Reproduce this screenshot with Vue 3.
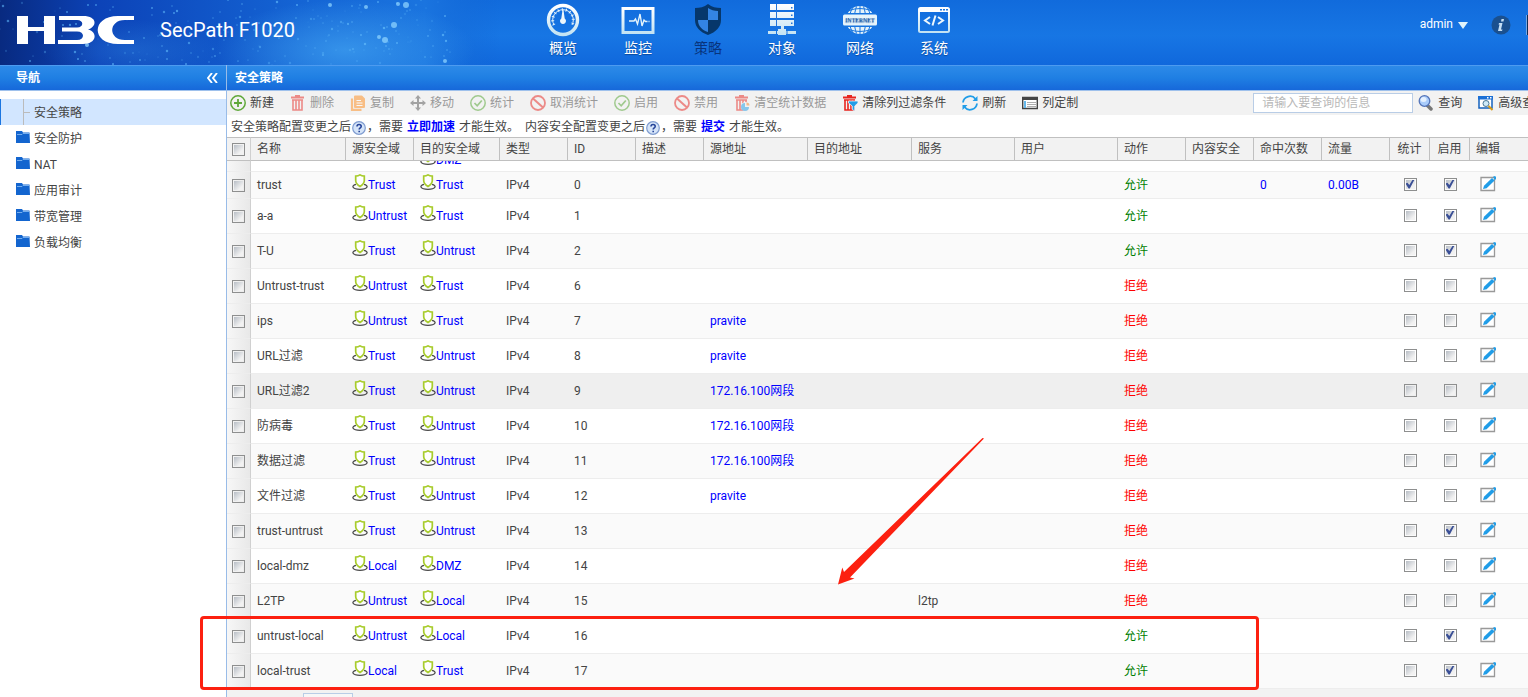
<script setup>
const nav = [
  { label: '概览', icon: 'gauge' },
  { label: '监控', icon: 'monitor' },
  { label: '策略', icon: 'policy', active: true },
  { label: '对象', icon: 'objects' },
  { label: '网络', icon: 'net' },
  { label: '系统', icon: 'system' },
]
const folders = ['安全防护', 'NAT', '应用审计', '带宽管理', '负载均衡']
const tools = [
  { label: '新建', icon: 'add', on: true },
  { label: '删除', icon: 'trash' },
  { label: '复制', icon: 'copy' },
  { label: '移动', icon: 'move' },
  { label: '统计', icon: 'okay' },
  { label: '取消统计', icon: 'ban' },
  { label: '启用', icon: 'okay' },
  { label: '禁用', icon: 'ban' },
  { label: '清空统计数据', icon: 'trashstat' },
  { label: '清除列过滤条件', icon: 'trashfilter', on: true },
  { label: '刷新', icon: 'refresh', on: true },
  { label: '列定制', icon: 'columns', on: true },
]
const columns = [
  ['名称', 'w95'], ['源安全域', 'w68'], ['目的安全域', 'w86'], ['类型', 'w68'], ['ID', 'w68'],
  ['描述', 'w68'], ['源地址', 'w104'], ['目的地址', 'w104'], ['服务', 'w103'], ['用户', 'w103'],
  ['动作', 'w68'], ['内容安全', 'w68'], ['命中次数', 'w68'], ['流量', 'w68'],
  ['统计', 'w40'], ['启用', 'w40'], ['编辑', 'wrest'],
]
const row = (id, name, src, dst, allow, enabled, extra = {}) => ({ id, name, src, dst, allow, enabled, ...extra })
const rows = [
  row(0, 'trust', 'Trust', 'Trust', true, true, { stat: true, hits: '0', flow: '0.00B', short: true }),
  row(1, 'a-a', 'Untrust', 'Trust', true, true),
  row(2, 'T-U', 'Trust', 'Untrust', true, true),
  row(6, 'Untrust-trust', 'Untrust', 'Trust', false, false),
  row(7, 'ips', 'Untrust', 'Trust', false, false, { addr: 'pravite' }),
  row(8, 'URL过滤', 'Trust', 'Untrust', false, false, { addr: 'pravite' }),
  row(9, 'URL过滤2', 'Trust', 'Untrust', false, false, { addr: '172.16.100网段', hover: true }),
  row(10, '防病毒', 'Trust', 'Untrust', false, false, { addr: '172.16.100网段' }),
  row(11, '数据过滤', 'Trust', 'Untrust', false, false, { addr: '172.16.100网段' }),
  row(12, '文件过滤', 'Trust', 'Untrust', false, false, { addr: 'pravite' }),
  row(13, 'trust-untrust', 'Trust', 'Untrust', false, true),
  row(14, 'local-dmz', 'Local', 'DMZ', false, false),
  row(15, 'L2TP', 'Untrust', 'Local', false, false, { service: 'l2tp' }),
  row(16, 'untrust-local', 'Untrust', 'Local', true, true),
  row(17, 'local-trust', 'Local', 'Trust', true, true),
]
let seed = 11
const rand = () => (seed = (seed * 16807) % 2147483647) / 2147483647
const stars = Array.from({ length: 210 }, () => ({
  x: Math.round(rand() * 450),
  y: Math.round(rand() * 65),
  r: 0.5 + rand() * 0.8,
  o: 0.2 + rand() * 0.55,
}))
</script>

<template>
  <div class="page">
    <svg class="defs" aria-hidden="true">
      <defs>
        <linearGradient id="ice" x1="0" y1="0" x2="0" y2="1">
          <stop offset="0" stop-color="#fff" /><stop offset="1" stop-color="#c3e3f3" />
        </linearGradient>
        <symbol id="gauge" viewBox="0 0 34 34">
          <circle cx="17" cy="17" r="14.5" fill="none" stroke="url(#ice)" stroke-width="3.4" />
          <path d="M8 22a10.300 10.300 0 1 1 18 0" fill="none" stroke="#e4f3fb" stroke-width="1" />
          <path d="M8 22a10.300 10.300 0 1 1 18 0" fill="none" stroke="#e4f3fb" stroke-width="3" stroke-dasharray="1 3" />
          <path d="M16.500 7h1l1.200 8.500a3 3 0 1 1-3.400 0z" fill="#edf7fc" />
        </symbol>
        <symbol id="monitor" viewBox="0 0 34 34">
          <path d="M2 5.500h30v24H2z" fill="none" stroke="url(#ice)" stroke-width="3" />
          <path d="M8 18h5l1.500-2 2 5 2.500-10 2 12 2-6 1.500 1.500h2M27.500 18.500h1" fill="none" stroke="#e4f3fb" stroke-width="1.400" />
        </symbol>
        <symbol id="policy" viewBox="0 0 34 34">
          <path d="M17 1c4 3 8 4 13 4v12c0 7-5 12-13 15C9 29 4 24 4 17V5c5 0 9-1 13-4z" fill="#06376b" />
          <path d="M17 5c3 2 6 3 10 3v9H17zM7 17h10v12C11 27 7 23 7 17z" fill="#3384e4" />
        </symbol>
        <symbol id="objects" viewBox="0 0 34 34">
          <path d="M5 1h24v6H5zM5 9h24v6H5zM5 17h24v6H5zM16 23h3v4h-3zM3 28h28v3H3zM13 26h8v6h-8z" fill="url(#ice)" />
          <path d="M11 1h1v22h-1zM26 4h1.500v1.500H26zM26 11.500h1.500V13H26zM26 19.500h1.500V21H26z" fill="#2475d8" />
          <path d="M11.500 27v5M22 27v5" stroke="#1775e0" />
        </symbol>
        <symbol id="net" viewBox="0 0 34 34">
          <circle cx="17" cy="17" r="14" fill="#e3f2fa" />
          <path d="M17 3v28M13.500 3.500c-3 8-3 19 0 27M20.500 3.500c3 8 3 19 0 27M10 4c-5 8-5 18 0 26M24 4c5 8 5 18 0 26M5 8q12-5 24 0M5 26q12 5 24 0" fill="none" stroke="#1775e0" stroke-width="1" />
          <rect x="-1" y="10" width="36" height="14" fill="#1775e0" /><rect x="0" y="11.500" width="34" height="11" rx="1.500" fill="#e6f4fb" />
          <text x="17" y="19.200" text-anchor="middle" font-family="Liberation Serif" font-size="6" fill="#0d4f9e">INTERNET</text>
        </symbol>
        <symbol id="system" viewBox="0 0 34 34">
          <rect x="2" y="5" width="30" height="24" rx="1.500" fill="none" stroke="url(#ice)" stroke-width="2" />
          <path d="M2 6h30v3H2z" fill="#fff" /><path d="M23 6h2v1.500h-2zM26 6h2v1.500h-2zM29 6h2v1.500h-2z" fill="#1775e0" />
          <path d="M13 14l-5 3.500 5 3.500M21 14l5 3.500-5 3.500M18.500 12.500l-3 10" fill="none" stroke="#edf7fc" stroke-width="2" />
        </symbol>
        <symbol id="add" viewBox="0 0 16 16"><circle cx="8" cy="8" r="7.200" fill="none" stroke="#5fa83a" stroke-width="1.500" /><path d="M8 4v8M4 8h8" stroke="#5fa83a" stroke-width="1.800" /></symbol>
        <symbol id="trash" viewBox="0 0 16 16"><path d="M5 1h5M1 2.500h13" stroke="#e8251f" stroke-width="1.800" /><path d="M3 5.500v9.500h9V5.500M6 5v10M9 5v10M2 5h11" fill="none" stroke="#e8251f" stroke-width="1.600" /></symbol>
        <symbol id="trashstat" viewBox="0 0 16 16"><use href="#trash" /><circle cx="11.500" cy="11.500" r="4.500" fill="#f2f2f2" /><path d="M11 8v4h4a4 4 0 1 1-4-4z" fill="#209de8" /><path d="M12.500 7.500a3 3 0 0 1 3 3h-3z" fill="#f58220" /></symbol>
        <symbol id="trashfilter" viewBox="0 0 16 16"><use href="#trash" /><path d="M6.500 6h9.500v2l-3.300 3V16l-2.500-1.500V11L6.500 8z" fill="#209de8" stroke="#f2f2f2" stroke-width=".8" /></symbol>
        <symbol id="copy" viewBox="0 0 16 16"><path d="M5 1.500h6.500L14 4v8H5z" fill="#ff8c1a" stroke="#ff8c1a" stroke-width="2" stroke-linejoin="round" /><path d="M2 3.500v11.300h9.500" fill="none" stroke="#ff8c1a" stroke-width="2.200" /><path d="M6.500 5.500H11M6.500 8h6M6.500 10.500h6" stroke="#fff" stroke-width="1.200" /></symbol>
        <symbol id="move" viewBox="0 0 16 16"><path d="M8 2v12M2 8h12" stroke="#555" stroke-width="2" /><path d="M8 0l3 3.500H5zM8 16l3-3.500H5zM0 8l3.500-3v6zM16 8l-3.500-3v6z" fill="#555" /></symbol>
        <symbol id="okay" viewBox="0 0 16 16"><circle cx="8" cy="8" r="7.200" fill="none" stroke="#4fa32c" stroke-width="1.500" /><path d="M4.500 8l2.700 2.800L11.800 5.500" fill="none" stroke="#4fa32c" stroke-width="1.700" /></symbol>
        <symbol id="ban" viewBox="0 0 16 16"><circle cx="8" cy="8" r="7" fill="none" stroke="#e8251f" stroke-width="1.800" /><path d="M3 3.500l10 9" stroke="#e8251f" stroke-width="2" /></symbol>
        <symbol id="refresh" viewBox="0 0 16 16"><path d="M1 7.500A7 7 0 0 1 13.500 4M15 8.500A7 7 0 0 1 2.500 12" fill="none" stroke="#209de8" stroke-width="1.800" /><path d="M15.500 1v5h-5zM.5 15v-5h5z" fill="#209de8" /></symbol>
        <symbol id="columns" viewBox="0 0 16 16"><path d="M.7 2.500h14.600v11H.7z" fill="#fff" stroke="#444" stroke-width="1.400" /><path d="M0 2h16v3H0z" fill="#444" /><path d="M5 7.500h9M5 9.500h9M5 11.500h9" stroke="#999" stroke-width=".8" /><path d="M2 6h2v7H2z" fill="#65b9ec" /></symbol>
        <symbol id="search" viewBox="0 0 16 16"><path d="M9 10l4 4" stroke="#777" stroke-width="3.500" stroke-linecap="round" /><circle cx="6.500" cy="6" r="5.300" fill="#a9ccfb" stroke="#5474b8" stroke-width="1.300" /><ellipse cx="5.500" cy="4.500" rx="3" ry="2.500" fill="#e4f0ff" /></symbol>
        <symbol id="adv" viewBox="0 0 16 16"><path d="M1 2h13v11H1z" fill="#fff" stroke="#1461bd" stroke-width="1.500" /><path d="M0 1h15v3.500H0z" fill="#1a6fd6" /><path d="M9 2h1.500v1.500H9zM12 2h1.500v1.500H12z" fill="#fff" /><circle cx="8" cy="8.500" r="3" fill="#cfeaf8" stroke="#4a7896" /><path d="M10.500 11l4 4" stroke="#d79a17" stroke-width="2" /></symbol>
        <symbol id="help" viewBox="0 0 14 14"><circle cx="7" cy="7" r="6.300" fill="#d5e4f8" stroke="#7f9cd0" stroke-width="1.200" /><path d="M5 5.600c0-3 4.200-2.500 4.200-.2C9.200 7 7.200 6.800 7.200 8.600M7.200 9.700v1.500" fill="none" stroke="#26449a" stroke-width="1.600" /></symbol>
        <symbol id="zone" viewBox="0 0 16 16"><path d="M4 10.300C-1 11.500 0 15.300 8 15.300s9-3.800 4-5" fill="none" stroke="#4a4a4a" stroke-width="1.300" /><path d="M8 .8c1.300 1 2.600 1.300 4.300 1.300v4.400c0 2.600-1.600 4.300-4.300 6-2.700-1.700-4.300-3.400-4.300-6V2.100C5.400 2.100 6.700 1.800 8 .8z" fill="#fff" stroke="#a8cc2c" stroke-width="1.700" /></symbol>
        <symbol id="edit" viewBox="0 0 16 16"><path d="M1 1.500h13.500v13H1z" fill="#fff" stroke="#999" stroke-width="1.300" /><path d="M3 13l1-3.300L12 2l2.600 2.500-8 7.700z" fill="#209de8" /><path d="M13 .8l2-.8 1 1v2l-1 1z" fill="#209de8" /></symbol>
        <symbol id="folder" viewBox="0 0 14 12"><path d="M0 0h6l1 1.500h6.500L14 12H0z" fill="#1365cf" /><path d="M1 3.500l5 0 1-1h6" fill="none" stroke="#7fb5f0" stroke-width=".9" /></symbol>
      </defs>
    </svg>

    <header class="banner">
      <svg class="sky" viewBox="0 0 500 65" preserveAspectRatio="none" aria-hidden="true">
        <defs>
          <linearGradient id="skyfill"><stop offset="0" stop-color="#082a80" /><stop offset=".2" stop-color="#0c43b8" /><stop offset=".6" stop-color="#1464d4" /><stop offset=".85" stop-color="#1a74df" /><stop offset="1" stop-color="#1264d3" stop-opacity="0" /></linearGradient>
          <radialGradient id="glow"><stop offset="0" stop-color="#3fa0f0" stop-opacity=".75" /><stop offset="1" stop-color="#3fa0f0" stop-opacity="0" /></radialGradient>
        </defs>
        <rect width="500" height="65" fill="url(#skyfill)" />
        <ellipse cx="345" cy="50" rx="130" ry="50" fill="url(#glow)" />
        <ellipse cx="130" cy="50" rx="90" ry="30" fill="url(#glow)" opacity=".35" />
        <circle v-for="(s, i) in stars" :key="i" :cx="s.x" :cy="s.y" :r="s.r" fill="#5fb8fa" :opacity="s.o" />
        <g fill="#8cd2ff" opacity=".75"><circle cx="394" cy="25" r="3" /><circle cx="385" cy="40" r="3" /><circle cx="379" cy="37" r="2" /><circle cx="406" cy="5" r="3" /><circle cx="398" cy="4" r="2" /><circle cx="330" cy="5" r="2" /><circle cx="366" cy="7" r="2" /><circle cx="445" cy="61" r="2" /><circle cx="87" cy="45" r="2" /></g>
      </svg>
      <svg class="logo" viewBox="0 0 118 28" role="img" aria-label="H3C">
        <g fill="#fff"><path d="M0 0h11v11h16V0h11v28H27V15H11v13H0z" /><path d="M42 0h24c15 0 14 11 5 13.500C81 16 80 28 66 28H41v-4h19c8 0 8-8.500 0-8.500H45v-4h15c7 0 7-7.500 0-7.500H42z" /><path d="M117 0v4h-9c-17 0-17 20 0 20h9v4h-16C74 28 74 0 101 0z" /></g>
      </svg>
      <h1>SecPath F1020</h1>
      <nav class="mainnav">
        <a v-for="n in nav" :key="n.label" href="#" :class="{ active: n.active }">
          <svg><use :href="'#' + n.icon" /></svg><span>{{ n.label }}</span>
        </a>
      </nav>
      <div class="account">
        <button class="user">admin<svg viewBox="0 0 10 7"><path d="M0 0h10L5 7z" fill="#e0f3fb" /></svg></button>
        <button class="info" aria-label="Info"><svg viewBox="0 0 20 20"><circle cx="10" cy="10" r="9.500" fill="#1a508f" /><path d="M10.500 4h2.500l-.5 2.500H10zM8 8h3.500l-1.500 6.500h1.500l-.5 1.500H7l1.500-6.500H7.500z" fill="#c4def4" /></svg></button>
        <span class="edge"></span>
      </div>
    </header>

    <div class="body">
      <aside class="side">
        <div class="bar"><h2>导航</h2><button class="fold" aria-label="收起"><svg viewBox="0 0 11 10"><path d="M5 0L1 5l4 5M10 0L6 5l4 5" fill="none" stroke="#fff" stroke-width="1.900" /></svg></button></div>
        <ul class="tree">
          <li class="current"><a href="#">安全策略</a></li>
          <li v-for="f in folders" :key="f"><a href="#"><svg><use href="#folder" /></svg>{{ f }}</a></li>
        </ul>
      </aside>

      <main class="main">
        <div class="bar"><h2>安全策略</h2></div>
        <div class="tools">
          <button v-for="t in tools" :key="t.label" :class="{ off: !t.on }" :disabled="!t.on"><svg><use :href="'#' + t.icon" /></svg>{{ t.label }}</button>
          <div class="find">
            <input type="text" aria-label="查询信息" placeholder="请输入要查询的信息">
            <button><svg><use href="#search" /></svg>查询</button>
            <button><svg><use href="#adv" /></svg>高级查询</button>
          </div>
        </div>
        <p class="notice">
          <span>安全策略配置变更之后</span><svg><use href="#help" /></svg><span>，需要</span><a href="#">立即加速</a><span class="end">才能生效。</span>
          <span>内容安全配置变更之后</span><svg><use href="#help" /></svg><span>，需要</span><a href="#">提交</a><span class="end">才能生效。</span>
        </p>
        <div class="gridwrap">
          <table>
            <colgroup><col class="w24"><col v-for="c in columns" :key="c[0]" :class="c[1]"></colgroup>
            <thead>
              <tr><th class="pick"><input type="checkbox" aria-label="全选"></th><th v-for="c in columns" :key="c[0]" :class="{ mid: c[1] === 'w40' }">{{ c[0] }}</th></tr>
            </thead>
            <tbody>
              <tr class="clipped">
                <td class="pick"></td><td></td><td></td>
                <td><div class="peek"><a href="#" class="zone"><svg><use href="#zone" /></svg>DMZ</a></div></td><td colspan="14"></td>
              </tr>
              <tr v-for="r in rows" :key="r.id" :class="{ short: r.short, hover: r.hover }">
                <td class="pick"><input type="checkbox" :aria-label="'选择 ' + r.name"></td>
                <td>{{ r.name }}</td>
                <td><a href="#" class="zone"><svg><use href="#zone" /></svg>{{ r.src }}</a></td>
                <td><a href="#" class="zone"><svg><use href="#zone" /></svg>{{ r.dst }}</a></td>
                <td>IPv4</td>
                <td>{{ r.id }}</td>
                <td></td>
                <td><a v-if="r.addr" href="#">{{ r.addr }}</a></td>
                <td></td>
                <td>{{ r.service }}</td>
                <td></td>
                <td :class="r.allow ? 'allow' : 'deny'">{{ r.allow ? '允许' : '拒绝' }}</td>
                <td></td>
                <td><a v-if="r.hits" href="#">{{ r.hits }}</a></td>
                <td><a v-if="r.flow" href="#">{{ r.flow }}</a></td>
                <td class="mid"><input type="checkbox" :checked="r.stat" :aria-label="'统计 ' + r.name"></td>
                <td class="mid"><input type="checkbox" :checked="r.enabled" :aria-label="'启用 ' + r.name"></td>
                <td class="edit"><button :aria-label="'编辑 ' + r.name"><svg><use href="#edit" /></svg></button></td>
              </tr>
            </tbody>
          </table>
        </div>
        <footer class="pager"><input type="text" aria-label="页码"></footer>
      </main>
    </div>
    <svg class="arrow" viewBox="0 0 148 148" aria-hidden="true"><path d="M145.500 1l1.500.500L13 140.500l4.500 1L1 147.500l4.300-17L7 135z" fill="#fc2010" /></svg>
    <div class="mark"></div>
  </div>
</template>

<style>
body { margin: 0; }
</style>
<style scoped>
.page { position: relative; height: 100vh; overflow: hidden; display: flex; flex-direction: column; background: #fff; color: #444; font: 12px/16px Roboto, "Noto Sans CJK SC", sans-serif; }
.page *, .page *::before { box-sizing: border-box; }
.defs { position: absolute; width: 0; height: 0; }
button { display: flex; align-items: center; padding: 0; border: 0; background: none; color: inherit; font: inherit; white-space: nowrap; }
a { color: #00f; text-decoration: none; }
h1, h2, ul, p { margin: 0; padding: 0; font-weight: 400; }

.banner { position: relative; flex: none; display: flex; height: 65px; background: linear-gradient(#116bdc, #1776e4 55%, #1068dc); color: #fff; overflow: hidden; }
.sky { position: absolute; left: 0; top: 0; width: 500px; height: 65px; }
.logo { position: relative; width: 118px; height: 28px; margin: 16px 0 0 17px; }
.banner h1 { position: relative; width: 365px; margin: 16px 0 0 25px; font-size: 20px; line-height: 28px; }
.mainnav { display: grid; grid-template-columns: 76px 74px 66px 82px 74px 74px; }
.mainnav a { display: flex; flex-direction: column; align-items: center; padding-top: 3px; color: #fff; font-size: 14px; line-height: 22px; text-shadow: 0 1px 1px #0a4a9c; }
.mainnav svg { width: 34px; height: 34px; }
.mainnav a.active { color: #08347c; text-shadow: none; }
.account { display: flex; align-items: flex-start; margin-left: auto; padding-top: 15px; }
.user { gap: 5px; height: 18px; margin-right: 23px; }
.user svg { width: 10px; height: 7px; margin-top: 3px; }
.info svg { width: 20px; height: 20px; }
.edge { width: 2px; height: 20px; margin-left: 15px; border-left: 1px solid #77a8e4; background: #102c56; }

.body { flex: 1; min-height: 0; display: flex; }
.side { flex: none; width: 227px; border-right: 1px solid #99bce8; }
.bar { flex: none; display: flex; align-items: center; justify-content: space-between; height: 26px; border-top: 1px solid #4d9bf0; border-bottom: 1px solid #9fc1ec; background: linear-gradient(#2d8ae8, #1f7fe3 50%, #1668da); color: #fff; }
.bar h2 { font-size: 12px; font-weight: 700; }
.side .bar { padding: 0 8px 0 16px; }
.main .bar { padding-left: 8px; }
.fold svg { width: 11px; height: 10px; }
.tree { list-style: none; padding-top: 8px; }
.tree a { display: flex; align-items: center; gap: 4px; height: 26px; padding: 2px 0 0 16px; color: #444; }
.tree svg { width: 14px; height: 12px; margin-bottom: 4px; }
.tree .current a { border-left: 1px solid #1b75e0; background: linear-gradient(#bbb, #bbb) 22px 0 / 1px 26px no-repeat, linear-gradient(#bbb, #bbb) 22px 13px / 7px 1px no-repeat #d2e6ff; padding-left: 33px; }

.main { flex: 1; min-width: 0; display: flex; flex-direction: column; }
.tools { flex: none; display: flex; align-items: center; gap: 16px; height: 24px; padding-left: 3px; background: #f2f2f2; overflow: hidden; }
.tools button { flex: none; gap: 4px; }
.tools button svg { width: 16px; height: 16px; }
.tools .off { color: #999; }
.tools .off svg { opacity: .5; }
.find { flex: none; display: flex; margin-left: 159px; }
.find input { width: 160px; height: 20px; margin-right: 5px; padding: 0 8px; border: 1px solid #b9cde6; background: #fff; font: inherit; }
.find input::placeholder { color: #b8b8b8; }
.find button + button { margin-left: 16px; }
.notice { flex: none; display: flex; align-items: center; height: 22px; padding: 2px 0 0 4px; white-space: nowrap; }
.notice svg { width: 14px; height: 14px; margin: 2px 1px 0; }
.notice a { margin: 0 4px; font-weight: 700; }
.notice .end { margin-right: 6px; }

.gridwrap { flex: none; overflow: hidden; }
table { width: 100%; table-layout: fixed; border-collapse: separate; border-spacing: 0; }
.w24 { width: 24px; } .w40 { width: 40px; } .w68 { width: 68px; } .w86 { width: 86px; }
.w95 { width: 95px; } .w103 { width: 103px; } .w104 { width: 104px; }
th { height: 24px; padding: 0 0 0 6px; border: solid #c0c0c0; border-width: 1px 1px 1px 0; background: #f2f2f2; font-weight: 400; text-align: left; white-space: nowrap; }
th:last-child { border-right: 0; }
td { height: 35px; padding: 0 0 0 6px; border-bottom: 1px solid #ededed; white-space: nowrap; }
tr.short td { height: 27px; }
tr.clipped td { height: 11px; }
tbody tr:nth-child(even) td { background: #fafafa; }
tbody tr.hover td { background: #efefef; }
.pick, tbody tr:nth-child(n) .pick { padding: 1px 0 0 5px; border-right: 1px solid #d0d0d0; }
tbody tr:nth-child(n) .pick { background: linear-gradient(90deg, #f7f7f7, #e8e8e8); }
th.mid { padding: 0; text-align: center; }
td.mid { padding: 0 0 2px; }
.allow { color: #008000; } .deny { color: #f00; }
.zone { display: flex; align-items: center; }
.zone svg { width: 16px; height: 16px; margin-bottom: 6px; }
.peek { display: flex; align-items: flex-end; height: 10px; overflow: hidden; }
td.edit { padding: 0 0 2px 10px; }
.edit svg { width: 16px; height: 16px; }
input[type=checkbox] { appearance: none; display: block; width: 13px; height: 13px; margin: 0; border: 1px solid #8e8f8f; background: linear-gradient(135deg, #b8bec6, #f2f2f2 75%) content-box; background-color: #fff; padding: 1px; }
.mid input[type=checkbox] { margin: 0 auto; }
input[type=checkbox]:checked::before { content: ""; display: block; width: 9px; height: 9px; background: #3a4f96; clip-path: polygon(0 45%, 22% 35%, 42% 62%, 80% 0, 100% 0, 48% 100%, 34% 100%); }
.pager { flex: 1; padding: 4px 0 0 76px; background: #f2f2f2; }
.pager input { display: block; width: 50px; height: 20px; border: 1px solid #b9cde6; background: #f7f7f7; }
.arrow { position: absolute; left: 837px; top: 437px; width: 148px; height: 148px; }
.mark { position: absolute; left: 200px; top: 616px; width: 1059px; height: 74px; border: 3px solid #fc2010; border-radius: 4px; }
</style>
